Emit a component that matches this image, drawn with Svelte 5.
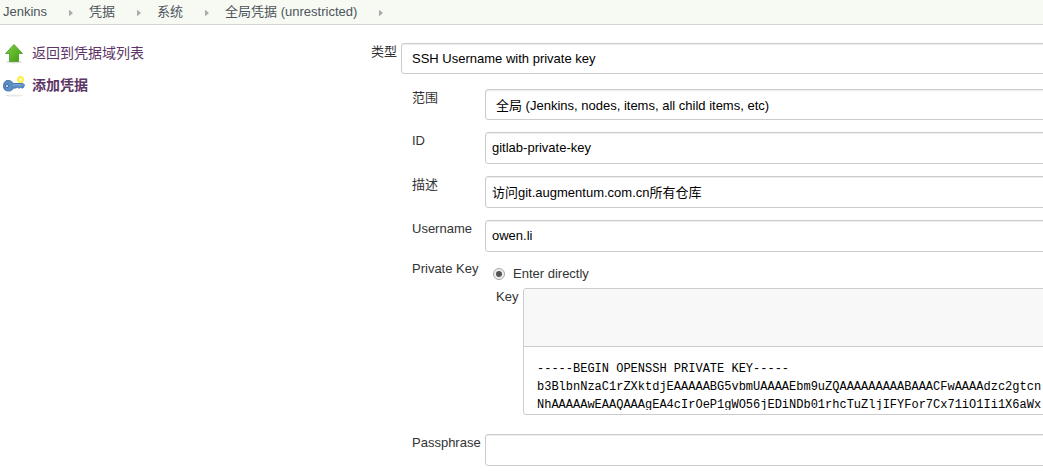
<script>
  const crumbs = ['Jenkins', '凭据', '系统', '全局凭据 (unrestricted)'];

  let id = $state('gitlab-private-key');
  let description = $state('访问git.augmentum.com.cn所有仓库');
  let username = $state('owen.li');
  let source = $state('direct');
  let passphrase = $state('');
  let key = $state(
    [
      '-----BEGIN OPENSSH PRIVATE KEY-----',
      'b3BlbnNzaC1rZXktdjEAAAAABG5vbmUAAAAEbm9uZQAAAAAAAAABAAACFwAAAAdzc2gtcn',
      'NhAAAAAwEAAQAAAgEA4cIrOeP1gWO56jEDiNDb01rhcTuZljIFYFor7Cx71iO1Ii1X6aWx'
    ].join('\n')
  );
</script>

<div class="page">
  <nav class="breadcrumbs" aria-label="Breadcrumb">
    {#each crumbs as crumb}
      <a href="#top">{crumb}</a>
      <svg class="chevron" viewBox="0 0 5 8" aria-hidden="true"><path d="M0 0 L5 4 L0 8 Z" /></svg>
    {/each}
  </nav>

  <div class="body">
    <aside class="tasks">
      <a class="task" href="#back">
        <svg viewBox="0 0 24 24" aria-hidden="true">
          <defs>
            <linearGradient id="leaf" x1="0" y1="0" x2="1" y2="1">
              <stop offset="0" stop-color="#8bc34c" />
              <stop offset="0.5" stop-color="#5fb827" />
              <stop offset="1" stop-color="#3f9416" />
            </linearGradient>
          </defs>
          <ellipse cx="12" cy="21" rx="8" ry="1.5" fill="#ddd" />
          <path d="M12 3.5 L20.5 12.5 H16.5 V20.5 H7.5 V12.5 H3.5 Z" fill="url(#leaf)" stroke="#5fa63a" stroke-linejoin="round" />
        </svg>
        <span>返回到凭据域列表</span>
      </a>
      <a class="task current" href="#add">
        <svg viewBox="0 0 24 24" aria-hidden="true">
          <ellipse cx="12" cy="22.5" rx="9" ry="1" fill="#e8e8e8" />
          <circle cx="18.5" cy="6.5" r="2.5" fill="#fffbc0" stroke="#fbf04a" stroke-width="2" />
          <path d="M6 7.5 C9 7.5 10.5 9 11.5 10.5 H21 L22.5 12 L21 15 H19.5 L18.5 14 L17 15.5 L15.5 14 L14 15 H11.5 C10.5 17 9 18 6.5 18 C3 18 1.5 16 1.5 13 C1.5 9.5 3 7.5 6 7.5 Z" fill="#5c8cc4" stroke="#4778b0" />
          <path d="M11 12 H20.5" stroke="#85acd8" />
          <circle cx="5" cy="13" r="1.5" fill="#fff" stroke="#33659f" />
        </svg>
        <span>添加凭据</span>
      </a>
    </aside>

    <main>
      <form>
        <div class="kind">
          <label for="kind">类型</label>
          <select id="kind">
            <option>SSH Username with private key</option>
          </select>
        </div>

        <div class="details">
          <label for="scope">范围</label>
          <select id="scope">
            <option>全局 (Jenkins, nodes, items, all child items, etc)</option>
          </select>

          <label for="cred-id">ID</label>
          <input id="cred-id" type="text" bind:value={id} />

          <label for="description">描述</label>
          <input id="description" type="text" bind:value={description} />

          <label for="username">Username</label>
          <input id="username" type="text" bind:value={username} />

          <span class="caption" id="pk">Private Key</span>
          <div class="private-key" role="radiogroup" aria-labelledby="pk">
            <label class="choice">
              <input type="radio" name="source" value="direct" bind:group={source} />
              Enter directly
            </label>
            <div class="key-row">
              <label for="key">Key</label>
              <div class="editor">
                <div class="editor-head"></div>
                <textarea id="key" spellcheck="false" wrap="off" bind:value={key}></textarea>
              </div>
            </div>
          </div>

          <label for="passphrase">Passphrase</label>
          <input id="passphrase" type="password" bind:value={passphrase} />
        </div>
      </form>
    </main>
  </div>
</div>

<style>
  .page {
    overflow: hidden;
    background: #fff;
    color: #333;
    font: 13px/18px 'Liberation Sans', 'Noto Sans CJK SC', sans-serif;
  }

  .breadcrumbs {
    display: flex;
    align-items: center;
    height: 24px;
    padding-left: 3px;
    border-bottom: 1px solid #d3d7cf;
    background: #f6faf2;
  }

  .breadcrumbs a {
    color: #4d545d;
    text-decoration: none;
    white-space: nowrap;
  }

  .chevron {
    flex: none;
    width: 4px;
    height: 8px;
    margin: 2px 16px 0 22px;
    fill: #aaa;
  }

  .body {
    display: flex;
    padding: 16px 0 6px;
  }

  .tasks {
    display: flex;
    flex: none;
    flex-direction: column;
    gap: 8px;
    width: 369px;
    box-sizing: border-box;
    padding: 0 0 0 2px;
  }

  .task {
    display: flex;
    align-items: center;
    gap: 6px;
    height: 24px;
    color: #5c3566;
    font-size: 14px;
    text-decoration: none;
  }

  .task svg {
    width: 24px;
    height: 24px;
  }

  .current {
    font-weight: bold;
  }

  main {
    flex: 1;
    min-width: 0;
    margin-right: -10px;
    padding: 2px 0 0 2px;
  }

  .kind {
    display: grid;
    grid-template-columns: 30px 1fr;
    margin-bottom: 15px;
  }

  .details {
    display: grid;
    grid-template-columns: 73px 1fr;
    row-gap: 12px;
    margin-left: 41px;
  }

  input,
  select {
    box-sizing: border-box;
    width: 100%;
    min-width: 0;
    height: 32px;
    margin: 0;
    padding: 5px 6px 7px;
    border: 1px solid #ccc;
    border-radius: 3px;
    background: #fff;
    box-shadow: inset 0 1px 1px rgba(0, 0, 0, 0.075);
    color: #000;
    font: inherit;
  }

  select {
    height: 31px;
    padding: 0 10px;
    appearance: none;
  }

  .details > select {
    padding-top: 2px;
  }

  .caption,
  .private-key {
    margin-top: -4px;
  }

  .private-key {
    padding-top: 4px;
  }

  .choice {
    display: flex;
    align-items: center;
    gap: 8px;
    height: 20px;
    padding-left: 8px;
  }

  .choice input {
    display: grid;
    place-items: center;
    width: 12px;
    height: 12px;
    padding: 0;
    border-color: #aaa;
    border-radius: 50%;
    background: #eee;
    box-shadow: none;
    appearance: none;
  }

  .choice input:checked::before {
    width: 6px;
    height: 6px;
    border-radius: 50%;
    background: #555;
    content: '';
  }

  .key-row {
    display: grid;
    grid-template-columns: 27px 1fr;
    margin: 4px 0 7px 11px;
  }

  .editor {
    box-sizing: border-box;
    min-width: 0;
    overflow: hidden;
    padding-bottom: 4px;
    border: 1px solid #ccc;
    border-radius: 3px;
  }

  .editor-head {
    height: 57px;
    border-bottom: 1px solid #ccc;
    background: #f8f8f8;
  }

  textarea {
    display: block;
    box-sizing: border-box;
    width: 100%;
    height: 63px;
    padding: 13px 0 0 13px;
    border: 0;
    background: #fff;
    color: #000;
    font: 12px/18px 'Liberation Mono', monospace;
    overflow: hidden;
    resize: none;
  }
</style>
